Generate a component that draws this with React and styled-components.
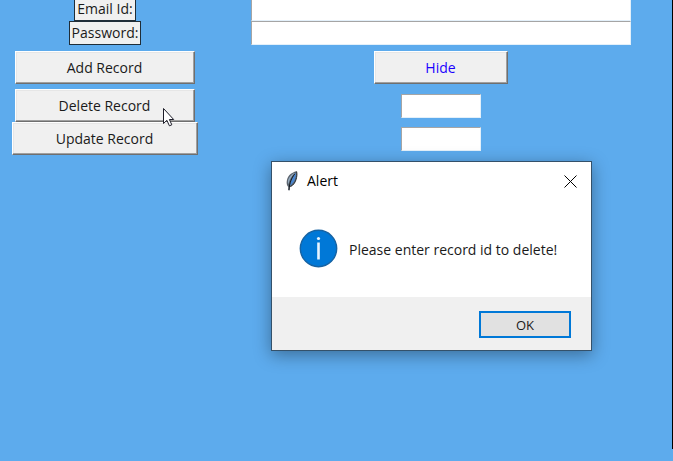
import React from "react";
import styled, { createGlobalStyle } from "styled-components";

const GlobalStyle = createGlobalStyle`
  * { box-sizing: border-box; }
  html, body { margin: 0; background: #5dabed; }
  body, button, input {
    font-family: "Open Sans", "Noto Sans", sans-serif;
    font-size: 14px;
    line-height: 20px;
    color: #1a1a1a;
  }
`;

const Window = styled.main`
  position: relative;
  min-height: 100vh;
  background: #5dabed;
  overflow: hidden;
`;

const Form = styled.form`
  display: grid;
  grid-template-columns: 210px 1fr;
  align-content: start;
  min-height: calc(100vh - 12px);
  border-right: 1px solid #000;
`;

const Cell = styled.div`
  display: flex;
  justify-content: center;
  align-items: center;
  padding: ${(p) => (p.$spaced ? "6px 0 5px" : "0")};
`;

const ClippedCell = styled(Cell)`
  height: 21px;
  align-items: flex-end;
  overflow: hidden;
`;

const FieldLabel = styled.label`
  flex: none;
  height: 24px;
  padding: 0 2px;
  border: 1px solid #1f2d38;
  background: #f0f0f0;
  line-height: 22px;
  white-space: nowrap;
`;

const Entry = styled.input`
  flex: none;
  width: ${(p) => (p.$wide ? "380px" : "80px")};
  height: 24px;
  padding: 0 2px;
  border: 1px solid;
  border-color: #a5a5a5 #e3f0fa #e3f0fa #a5a5a5;
  border-radius: 0;
  background: #fff;
  outline: none;
`;

const RaisedButton = styled.button`
  width: ${(p) => p.$width};
  height: 33px;
  padding: 0 1px 0 0;
  border: 1px solid;
  border-color: #fff #6f6f6f #6f6f6f #fff;
  border-radius: 0;
  background: #f0f0f0;
  box-shadow: inset -1px -1px #a0a0a0, inset 1px 1px #e6e6e6;
  color: ${(p) => p.$color || "#1a1a1a"};
`;

const PointerAnchor = styled.div`
  position: relative;
  display: flex;
`;

const Pointer = styled.svg`
  position: absolute;
  right: 20px;
  top: 18px;
  z-index: 1;
  pointer-events: none;
`;

const Dialog = styled.section`
  position: absolute;
  left: 271px;
  top: 161px;
  width: 321px;
  border: 1px solid #34516a;
  background: #fff;
  box-shadow: 0 4px 16px rgba(0, 0, 0, 0.36);
`;

const TitleBar = styled.header`
  display: flex;
  align-items: center;
  height: 38px;
  padding: 0 14px 0 12px;
`;

const Title = styled.h1`
  flex: 1;
  margin: 0 0 0 7px;
  font-size: 14px;
  line-height: 20px;
  font-weight: 400;
  color: #000;
`;

const CloseButton = styled.button`
  display: flex;
  padding: 0;
  border: 0;
  background: none;
`;

const Message = styled.div`
  display: flex;
  align-items: center;
  gap: 11px;
  height: 97px;
  padding: 0 27px;
`;

const MessageText = styled.p`
  margin: 0;
  padding-top: 2px;
  font-size: 14px;
  line-height: 20px;
  white-space: nowrap;
`;

const Actions = styled.footer`
  display: flex;
  justify-content: flex-end;
  padding: 14px 20px 12px;
  background: #f0f0f0;
`;

const OkButton = styled.button`
  width: 92px;
  height: 27px;
  padding: 0;
  border: 2px solid #0078d7;
  border-radius: 0;
  background: #e1e1e1;
  font-size: 13px;
`;

function FeatherIcon() {
  return (
    <svg width="16" height="20" viewBox="0 0 16 20" aria-hidden="true">
      <path d="M12.6.3C8.6 1 4.6 3.8 3.2 8c-.8 2.6-.7 5 .1 6.7l1 1.2.2 3.6h1.1l.4-3.5c3-1.2 5.3-4.2 6.2-7.7.8-2.9 1-5.9.4-8Z" fill="#5b646e" />
      <path d="M11.2 1.7C7.8 2.8 5.2 5.4 4.3 8.600c-.5 1.9-.5 3.5 0 4.7C5.3 9 7.6 5 11.2 1.7Z" fill="#94a9bd" />
      <path d="M12 1.8C8.7 5.6 6.5 10 5.7 14.7c2.7-1.3 4.6-3.9 5.5-6.9.7-2.2 1-4.4.8-6Z" fill="#4a86cf" />
      <path d="M10.6 3.2C7.5 7 5.6 11.5 4.9 19" stroke="#10161d" strokeWidth="1" fill="none" />
      <path d="M12.6.5c.6 2.4.3 5.2-.5 7.9-.9 3.2-2.8 5.9-5.7 7.2" stroke="#252b32" strokeWidth="1" fill="none" />
    </svg>
  );
}

function InfoIcon() {
  return (
    <svg width="39" height="39" viewBox="0 0 39 39" aria-hidden="true">
      <circle cx="19.5" cy="19.5" r="18.2" fill="#0078d7" stroke="#1763a3" strokeWidth="1.4" />
      <rect x="18.2" y="13.5" width="2.6" height="17" fill="#e8f4ff" />
      <circle cx="19.5" cy="9.5" r="1.6" fill="#e8f4ff" />
    </svg>
  );
}

export default function App() {
  return (
    <>
      <GlobalStyle />
      <Window>
        <Form onSubmit={(e) => e.preventDefault()}>
          <ClippedCell><FieldLabel htmlFor="email">Email Id:</FieldLabel></ClippedCell>
          <ClippedCell><Entry id="email" type="email" $wide /></ClippedCell>

          <Cell><FieldLabel htmlFor="password">Password:</FieldLabel></Cell>
          <Cell><Entry id="password" type="password" $wide /></Cell>

          <Cell $spaced><RaisedButton type="button" $width="180px">Add Record</RaisedButton></Cell>
          <Cell $spaced><RaisedButton type="button" $width="134px" $color="#1a00ff">Hide</RaisedButton></Cell>

          <Cell>
            <PointerAnchor>
              <RaisedButton type="button" $width="180px">Delete Record</RaisedButton>
              <Pointer width="13" height="20" viewBox="0 0 13 20" aria-hidden="true">
                <path d="M1.5 1.5v15l3.4-3.2 2.5 5.5 2.4-1-2.4-5.3h4.3Z" fill="#fff" stroke="#1c1c28" strokeWidth="1" />
              </Pointer>
            </PointerAnchor>
          </Cell>
          <Cell><Entry type="text" aria-label="Record id to delete" /></Cell>

          <Cell><RaisedButton type="button" $width="186px">Update Record</RaisedButton></Cell>
          <Cell><Entry type="text" aria-label="Record id to update" /></Cell>
        </Form>

        <Dialog role="alertdialog" aria-labelledby="alert-title" aria-describedby="alert-text">
          <TitleBar>
            <FeatherIcon />
            <Title id="alert-title">Alert</Title>
            <CloseButton type="button" aria-label="Close">
              <svg width="13" height="13" viewBox="0 0 13 13" aria-hidden="true">
                <path d="M.5.5l12 12M12.5.5l-12 12" stroke="#000" strokeWidth="1" />
              </svg>
            </CloseButton>
          </TitleBar>
          <Message>
            <InfoIcon />
            <MessageText id="alert-text">Please enter record id to delete!</MessageText>
          </Message>
          <Actions><OkButton type="button">OK</OkButton></Actions>
        </Dialog>
      </Window>
    </>
  );
}
